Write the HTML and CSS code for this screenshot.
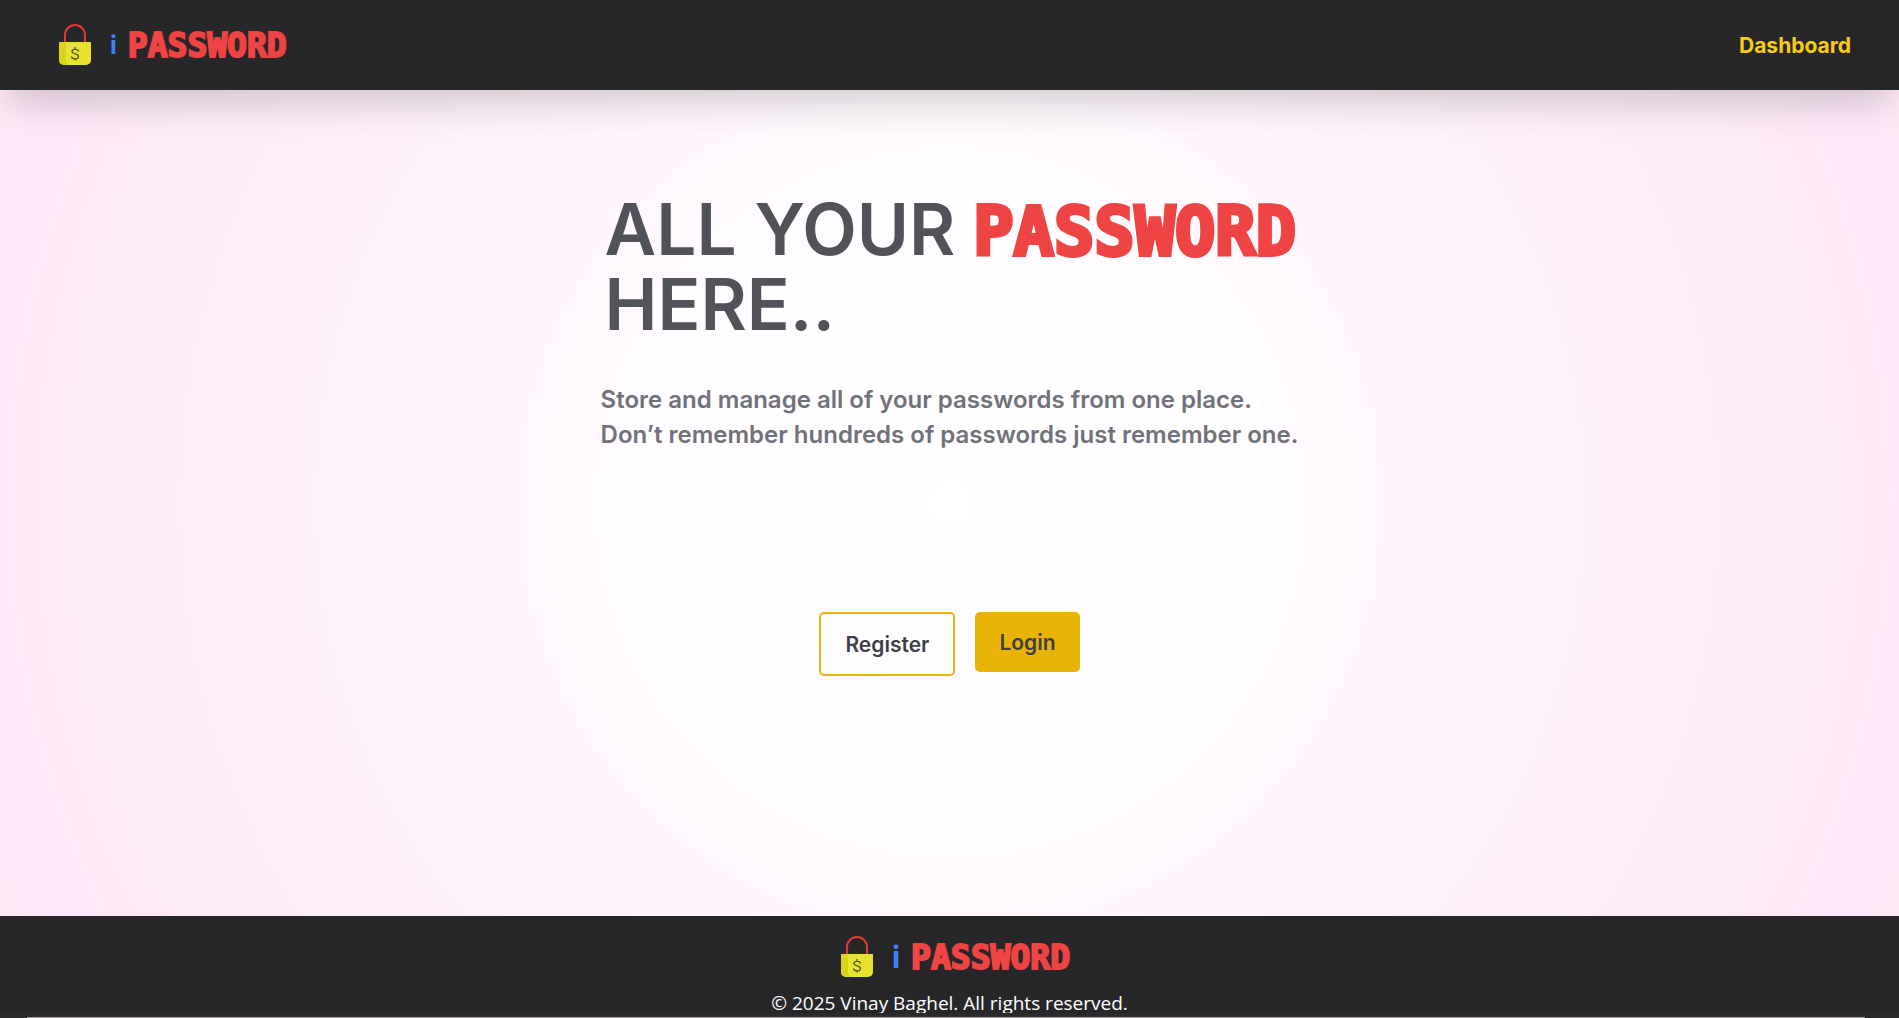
FILE: index.html
```
<!DOCTYPE html>
<html lang="en">
<head>
<meta charset="utf-8">
<meta name="viewport" content="width=device-width, initial-scale=1">
<title>iPassword</title>
<link rel="stylesheet" href="styles.css">
</head>
<body>
<svg class="defs" width="0" height="0" aria-hidden="true">
  <symbol id="lock" viewBox="0 0 32 42">
    <path d="M6 19V11a10 10 0 0 1 20 0v8" fill="none" stroke="#e53935" stroke-width="2"/>
    <path d="M0 18h32v18a5 5 0 0 1-5 5H5a5 5 0 0 1-5-5z" fill="#e6e22e"/>
    <path d="M0 18h7v18a5 5 0 0 0 4 5H5a5 5 0 0 1-5-5z" fill="#d9d31c"/>
    <path d="M19.500 27.500C19 24.500 13 24.500 13 27.500C13 30.500 19.500 29 19.500 32.500C19.500 36 12.500 35.500 12.500 32.500M16 23v2.500M16 34.500V36.500" fill="none" stroke="#4a4a20" stroke-width="1.200"/>
  </symbol>
</svg>
<header class="navbar">
  <a class="brand" href="#">
    <svg class="lock" aria-hidden="true"><use href="#lock"/></svg>
    <span class="brand-i">i</span>
    <span class="brand-name">PASSWORD</span>
  </a>
  <nav><a class="nav-link" href="#">Dashboard</a></nav>
</header>
<main class="hero">
  <div class="intro">
    <h1 class="title">ALL YOUR <span class="rough">PASSWORD</span><br>HERE..</h1>
    <p class="lead">Store and manage all of your passwords from one place.<br>Don’t remember hundreds of passwords just remember one.</p>
  </div>
  <div class="actions">
    <button class="btn btn-outline" type="button">Register</button>
    <button class="btn btn-solid" type="button">Login</button>
  </div>
</main>
<footer class="footer">
  <a class="brand brand-footer" href="#">
    <svg class="lock" aria-hidden="true"><use href="#lock"/></svg>
    <span class="brand-i">i</span>
    <span class="brand-name">PASSWORD</span>
  </a>
  <p class="copyright">© 2025 Vinay Baghel. All rights reserved.</p>
</footer>
<div class="bottom-edge"></div>
</body>
</html>
```
FILE: styles.css
```
* { box-sizing: border-box; }
body {
  margin: 0;
  height: 100vh;
  display: flex;
  flex-direction: column;
  overflow: hidden;
  font-family: Inter, "Open Sans", sans-serif;
  background: #2b2b2d;
}
h1, p { margin: 0; }
a { text-decoration: none; }
.defs { position: absolute; }
.navbar {
  position: relative;
  flex: none;
  height: 90px;
  padding: 0 48px 0 59px;
  display: flex;
  align-items: center;
  justify-content: space-between;
  background: #272729;
  box-shadow: 0 20px 40px -8px rgb(0 0 0 / 18%);
}
.brand {
  display: flex;
  align-items: center;
  line-height: 40px;
}
.lock { width: 32px; height: 42px; }
.brand-i {
  margin: 0 11px 0 19px;
  color: #3b82f6;
  font-size: 25px;
  font-weight: 700;
}
.brand-footer { padding-left: 12px; }
.brand-footer .brand-i { font-size: 30px; }
.brand-name {
  padding-top: 2px;
  color: #ef4444;
  font-family: "DejaVu Sans Mono", monospace;
  font-size: 33px;
  font-weight: 700;
  -webkit-text-stroke: 2px #ef4444;
}
.nav-link {
  color: #facc15;
  font-size: 21px;
  font-weight: 700;
}
.hero {
  flex: 1;
  min-height: 0;
  padding-top: 102px;
  display: flex;
  flex-direction: column;
  align-items: center;
  background: radial-gradient(circle, #fff 0, #fffcff 320px, #fff5fc 480px, #feeff8 680px, #fdeaf5 900px, #fde7f9 990px, #fdeaf5 1035px);
}
.title {
  padding-left: 4px;
  color: #52525b;
  font-size: 71px;
  font-weight: 600;
  line-height: 75px;
}
.rough {
  color: #ef4444;
  font-family: "DejaVu Sans Mono", monospace;
  font-size: 67px;
  font-weight: 700;
  line-height: 60px;
  -webkit-text-stroke: 4px #ef4444;
}
.lead {
  margin-top: 40px;
  color: #71717a;
  font-size: 24px;
  font-weight: 600;
  line-height: 35px;
}
.actions {
  margin-top: 160px;
  display: flex;
  align-items: flex-start;
  gap: 20px;
}
.btn {
  padding: 0 24px;
  height: 60px;
  border: 0;
  border-radius: 5px;
  color: #3f3f46;
  font-family: inherit;
  font-size: 21px;
  font-weight: 600;
}
.btn-outline {
  height: 64px;
  border: 2px solid #eab308;
  background: transparent;
}
.btn-solid { background: #eab308; }
.footer {
  flex: none;
  height: 97px;
  padding-top: 20px;
  overflow: hidden;
  display: flex;
  flex-direction: column;
  align-items: center;
  gap: 10px;
  background: #272729;
}
.copyright {
  color: #fff;
  font-family: "Open Sans", sans-serif;
  font-size: 19px;
  line-height: 30px;
}
.bottom-edge {
  flex: none;
  height: 5px;
  margin: 0 34px 0 27px;
  border-bottom: 1px solid #a8a3a5;
}
```
